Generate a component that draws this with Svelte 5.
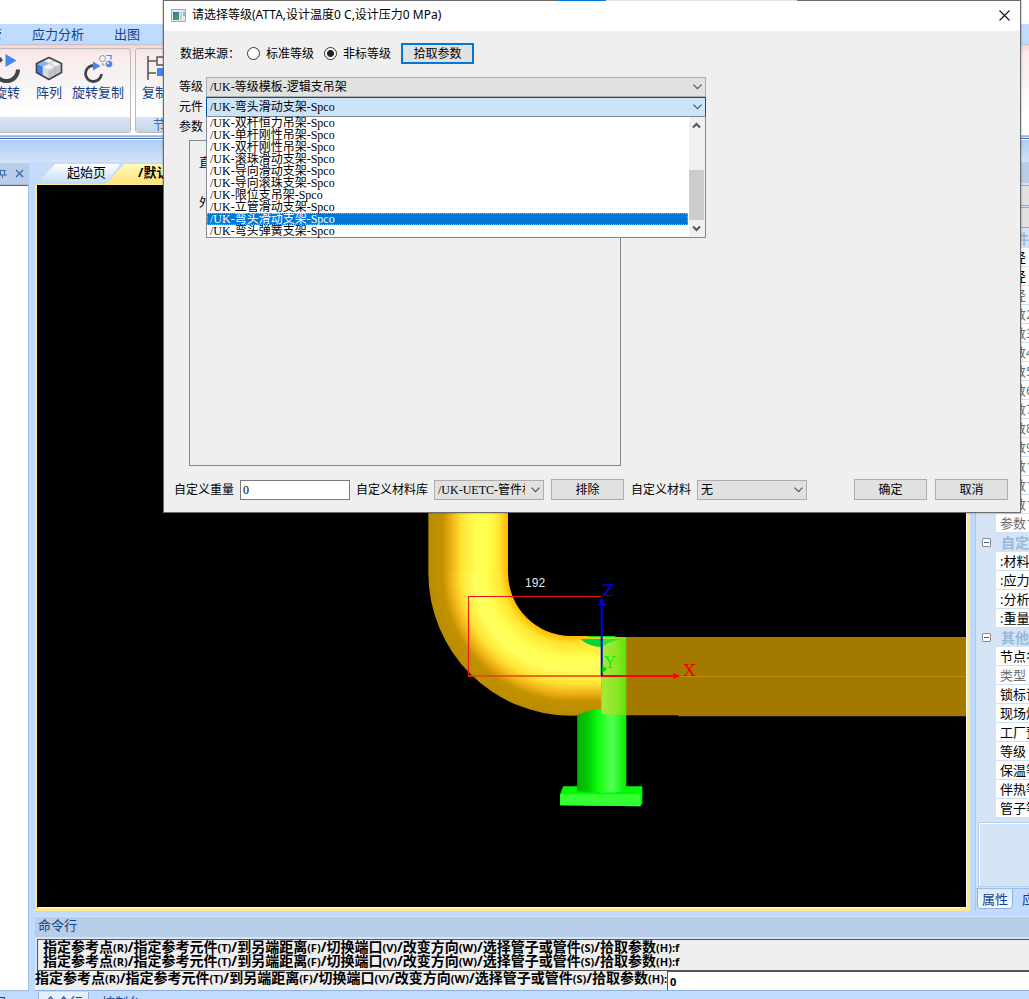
<script lang="ts">
  const menus = ['支管', '应力分析', '出图'];

  const grades = ['/UK-等级模板-逻辑支吊架'];
  const components = [
    '/UK-双杆恒力吊架-Spco',
    '/UK-单杆刚性吊架-Spco',
    '/UK-双杆刚性吊架-Spco',
    '/UK-滚珠滑动支架-Spco',
    '/UK-导向滑动支架-Spco',
    '/UK-导向滚珠支架-Spco',
    '/UK-限位支吊架-Spco',
    '/UK-立管滑动支架-Spco',
    '/UK-弯头滑动支架-Spco',
    '/UK-弯头弹簧支架-Spco'
  ];

  let source = $state('custom');
  let grade = $state(grades[0]);
  let component = $state('/UK-弯头滑动支架-Spco');
  let weight = $state('0');
  let command = $state('0');

  const prompts = [
    ['指定参考点', 'R'],
    ['指定参考元件', 'T'],
    ['到另端距离', 'F'],
    ['切换端口', 'V'],
    ['改变方向', 'W'],
    ['选择管子或管件', 'S'],
    ['拾取参数', 'H']
  ];

  // muted rows are read-only
  const sections = [
    {
      title: '管件',
      rows: [
        { name: '直径' },
        { name: '外径' },
        { name: '内径', muted: true },
        ...[2, 3, 4, 5, 6, 7, 8, 9, 10, 11, 12, 13].map((n) => ({ name: `参数${n}`, muted: true }))
      ]
    },
    {
      title: '自定义',
      rows: [{ name: ':材料' }, { name: ':应力' }, { name: ':分析' }, { name: ':重量' }]
    },
    {
      title: '其他',
      rows: [
        { name: '节点名' },
        { name: '类型', muted: true },
        { name: '锁标识' },
        { name: '现场焊' },
        { name: '工厂预制' },
        { name: '等级' },
        { name: '保温等级' },
        { name: '伴热等级' },
        { name: '管子等级' }
      ]
    }
  ];
</script>

{#snippet chevron()}
  <svg class="chevron" width="9" height="6" viewBox="0 0 9 6" aria-hidden="true">
    <path d="M0.5 0.7 L4.5 4.7 L8.5 0.7" fill="none" stroke="#555" stroke-width="1.2" />
  </svg>
{/snippet}

{#snippet promptText()}
  {#each prompts as [name, key], i}{name}<small>({key})</small>{#if i < prompts.length - 1}/{:else}<small>:</small>{/if}{/each}
{/snippet}

<div class="app">
  <div class="app-title"></div>

  <nav class="menubar">
    <div class="menu-items">
      {#each menus as menu}
        <button class="menu">{menu}</button>
      {/each}
    </div>
  </nav>

  <div class="ribbon">
    <div class="group first">
      <div class="tools">
        <button class="tool">
          <svg width="32" height="32" viewBox="0 0 32 32">
            <path d="M11 6 A11.5 11.5 0 1 0 27 16.500" fill="none" stroke="#414449" stroke-width="4" />
            <path d="M14.500 1 L25.500 7.500 L14.500 14 Z" fill="#4285f4" />
          </svg>
          旋转
        </button>
        <button class="tool">
          <svg width="32" height="32" viewBox="0 0 32 32">
            <path d="M3.500 10.500 L16 16.500 V26.500 L3.500 19.500 Z" fill="#d9dadd" />
            <path d="M28.500 10.500 L16 16.500 V26.500 L28.500 19.500 Z" fill="#c3c5c9" />
            <path d="M3.500 10.500 L16 4.500 L28.500 10.500 L16 16.500 Z" fill="#f1f2f3" />
            <path d="M3.500 10.500 L9.700 7.500 L16 10.500 L9.700 13.500 Z" fill="#8ab6f8" />
            <path d="M3.500 10.500 L9.700 13.500 V23 L3.500 19.500 Z" fill="#3f80ea" />
            <path d="M9.700 13.500 L22.300 7.500 M9.700 7.500 L22.300 13.500 V23 M16 16.500 V26 M16 21 L28 15" fill="none" stroke="#b3b6bb" stroke-width="0.800" />
            <path d="M3.500 10.500 L16 4.500 L28.500 10.500 V19.500 L16 26.500 L3.500 19.500 Z" fill="none" stroke="#414449" stroke-width="1.700" stroke-linejoin="round" />
          </svg>
          阵列
        </button>
        <button class="tool">
          <svg width="32" height="32" viewBox="0 0 32 32">
            <path d="M11 12.500 A8 8 0 1 0 19.500 21" fill="none" stroke="#414449" stroke-width="2.800" />
            <path d="M11 8.500 L18.500 13 L11 17.500 Z" fill="#4285f4" />
            <circle cx="20.500" cy="5.500" r="3" fill="#f4f4f4" stroke="#8c8f94" />
            <circle cx="27" cy="11" r="3" fill="#4285f4" stroke="#6f89b5" />
            <circle cx="26" cy="10" r="1.200" fill="#cfe0fb" />
            <path d="M24.500 2.500 H29 V6.500" fill="none" stroke="#4285f4" stroke-width="1.200" />
            <path d="M20.500 10 V12 H22.500" fill="none" stroke="#8c8f94" />
          </svg>
          旋转复制
        </button>
      </div>
      <div class="caption"></div>
    </div>
    <div class="group">
      <div class="tools">
        <button class="tool">
          <svg width="32" height="32" viewBox="0 0 32 32">
            <path d="M9 3 V27 M9 8 H17 M9 20 H17" fill="none" stroke="#55585e" stroke-width="1.600" />
            <path d="M18 4 h7 v8 h-7 z" fill="none" stroke="#55585e" stroke-width="1.600" />
            <path d="M18 15 h8 v8 h-8 z" fill="#4285f4" />
          </svg>
          复制
        </button>
      </div>
      <div class="caption">节点</div>
    </div>
  </div>

  <div class="ribbon-foot"></div>

  <div class="body">
    <aside class="left-dock">
      <header class="dock-head">
        <button class="dock-btn" aria-label="固定">
          <svg width="9" height="9" viewBox="0 0 9 9"><path d="M1 1.500 H8 M2.500 1.500 V6 M6.500 1.500 V6 M0 6 H9 M4.500 6 V9" fill="none" stroke="#3d67a5" /></svg>
        </button>
        <button class="dock-btn" aria-label="关闭">
          <svg width="9" height="9" viewBox="0 0 9 9"><path d="M1 1 L8 8 M8 1 L1 8" fill="none" stroke="#3d67a5" stroke-width="1.300" /></svg>
        </button>
      </header>
      <div class="dock-body"></div>
      <div class="foot-tabs end"><button class="foot-tab">项目</button></div>
    </aside>

    <div class="main">
      <div class="upper">
        <section class="document">
          <div class="doc-tabs">
            <button class="doc-tab">起始页</button>
            <button class="doc-tab active">/默认视图</button>
          </div>
          <div class="viewport">
            <svg viewBox="38 186 927 721" preserveAspectRatio="xMinYMin slice">
              <defs>
                <linearGradient id="pipe-v">
                  <stop offset="0" stop-color="#b98c00" />
                  <stop offset="0.18" stop-color="#c39100" />
                  <stop offset="0.3" stop-color="#f3b41a" />
                  <stop offset="0.42" stop-color="#ffe636" />
                  <stop offset="0.6" stop-color="#ffff52" />
                  <stop offset="0.75" stop-color="#ffff4c" />
                  <stop offset="0.88" stop-color="#ffe733" />
                  <stop offset="1" stop-color="#ffb800" />
                </linearGradient>
                <radialGradient id="pipe-bend" gradientUnits="userSpaceOnUse" cx="571" cy="573" r="142.500">
                  <stop offset="0.443" stop-color="#ffb800" />
                  <stop offset="0.5" stop-color="#ffe733" />
                  <stop offset="0.6" stop-color="#ffff54" />
                  <stop offset="0.68" stop-color="#ffff60" />
                  <stop offset="0.77" stop-color="#ffe636" />
                  <stop offset="0.84" stop-color="#f3b41a" />
                  <stop offset="0.9" stop-color="#c39100" />
                  <stop offset="1" stop-color="#b98c00" />
                </radialGradient>
                <linearGradient id="pipe-h" x1="0" y1="0" x2="0" y2="1">
                  <stop offset="0" stop-color="#ffb800" />
                  <stop offset="0.1" stop-color="#ffe733" />
                  <stop offset="0.28" stop-color="#ffff54" />
                  <stop offset="0.43" stop-color="#ffff60" />
                  <stop offset="0.59" stop-color="#ffe636" />
                  <stop offset="0.71" stop-color="#f3b41a" />
                  <stop offset="0.82" stop-color="#c39100" />
                  <stop offset="1" stop-color="#b98c00" />
                </linearGradient>
                <linearGradient id="post">
                  <stop offset="0" stop-color="#00b000" />
                  <stop offset="0.2" stop-color="#00c800" />
                  <stop offset="0.42" stop-color="#0cff0c" />
                  <stop offset="0.7" stop-color="#55ff55" />
                  <stop offset="1" stop-color="#00f000" />
                </linearGradient>
                <linearGradient id="post-through">
                  <stop offset="0" stop-color="#a8e83a" />
                  <stop offset="0.6" stop-color="#8ae828" />
                  <stop offset="1" stop-color="#5ee200" />
                </linearGradient>
              </defs>

              <rect x="428.500" y="500" width="79.500" height="73.500" fill="url(#pipe-v)" />
              <path d="M428.500 573 A142.500 142.500 0 0 0 571 715.500 V636 A63 63 0 0 1 508 573 Z" fill="url(#pipe-bend)" />
              <rect x="570.500" y="636" width="31" height="79.500" fill="url(#pipe-h)" />
              <path d="M601 637 H985 V716 H678 V715 H601 Z" fill="#a37900" />
              <path d="M680 676.500 H985" stroke="#bd8d00" />

              <path d="M580 639 H601 V647 Q590 647 580 639 Z" fill="#00d43a" />
              <path d="M588 636.500 H615" stroke="#00e000" />
              <rect x="601" y="637" width="25" height="79" fill="url(#post-through)" />
              <path d="M601 639 H622 Q612 640 601 647 Z" fill="#35e52c" />

              <path d="M563 786 H642 V803 L640 806 L560 805 V794 Z" fill="#00f800" />
              <path d="M560 794 H640 V806 L560 805 Z" fill="#33ff33" />
              <path d="M577 715 Q589 709 601 709 V714 L626 715 V791 Q601 794 577 791 Z" fill="url(#post)" />

              <path d="M601 596.500 H468.500 V676" fill="none" stroke="#f01010" />
              <path d="M468 676 H601" stroke="#e8420a" stroke-width="1.500" />
              <path d="M601 676 H674" stroke="#f00" stroke-width="2" />
              <path d="M673 673 L680 676 L673 679 Z" fill="#f00" />
              <path d="M601.500 676 V603" stroke="#0000e6" stroke-width="2" />
              <path d="M598 605 L601.500 597 L605 605 Z" fill="#0000f0" />
              <path d="M602 665 L607 669 L602 673 Z" fill="#00dc00" />

              <text x="525" y="587" class="dim">192</text>
              <text x="602" y="596" class="axis" fill="#0000e6">Z</text>
              <text x="604" y="668" class="axis" fill="#10f010">Y</text>
              <text x="683" y="676" class="axis" fill="#f00000">X</text>
            </svg>
          </div>
        </section>

        <aside class="props">
          <header class="props-head"></header>
          <select class="props-pick" aria-label="对象"></select>
          <select class="props-pick" aria-label="过滤"></select>
          <div class="prop-grid">
            {#each sections as section}
              <div class="prop-title">
                <button class="fold" aria-label="折叠{section.title}"></button>
                <span>{section.title}</span>
              </div>
              {#each section.rows as row}
                <div class="prop" class:muted={row.muted}>{row.name}</div>
              {/each}
            {/each}
          </div>
          <div class="prop-desc"></div>
          <div class="prop-tabs">
            <button class="prop-tab active">属性</button>
            <button class="prop-tab">应力</button>
          </div>
        </aside>
      </div>

      <section class="command">
        <header class="command-head">命令行</header>
        <div class="history">
          <p>{@render promptText()}<small>f</small></p>
          <p>{@render promptText()}<small>f</small></p>
        </div>
        <div class="prompt">
          <label for="command">{@render promptText()}</label>
          <input id="command" bind:value={command} />
        </div>
      </section>
      <div class="foot-tabs">
        <button class="foot-tab active">命令行</button>
        <button class="foot-tab">控制台</button>
      </div>
    </div>
  </div>

  <div class="dialog" role="dialog" aria-labelledby="dialog-title">
    <div class="edge"><span></span></div>
    <header class="dialog-head">
      <svg width="15" height="13" viewBox="0 0 15 13" aria-hidden="true">
        <defs>
          <linearGradient id="app-icon" x1="0" y1="0" x2="1" y2="1">
            <stop offset="0" stop-color="#3a6ea8" />
            <stop offset="1" stop-color="#46a86c" />
          </linearGradient>
        </defs>
        <rect x="0.500" y="0.500" width="14" height="12" fill="#e4e9ed" stroke="#a3abb3" />
        <rect x="2" y="3" width="6" height="8" fill="url(#app-icon)" />
        <rect x="9" y="3" width="2" height="8" fill="#c5d0d6" />
        <rect x="12" y="3" width="2" height="4" fill="#9fb8a8" />
      </svg>
      <span id="dialog-title">请选择等级(ATTA,设计温度0 C,设计压力0 MPa)</span>
      <button class="close" aria-label="关闭">
        <svg width="11" height="11" viewBox="0 0 11 11"><path d="M0.500 0.500 L10.500 10.500 M10.500 0.500 L0.500 10.500" stroke="#111" stroke-width="1.100" /></svg>
      </button>
    </header>

    <div class="source">
      <span>数据来源：</span>
      <label><input type="radio" value="standard" bind:group={source} />标准等级</label>
      <label><input type="radio" value="custom" bind:group={source} />非标等级</label>
      <button class="btn focus">拾取参数</button>
    </div>

    <div class="fields">
      <label for="grade">等级</label>
      <div class="combo">
        <select id="grade" bind:value={grade}>
          {#each grades as item}<option>{item}</option>{/each}
        </select>
        {@render chevron()}
      </div>

      <label for="component">元件</label>
      <div class="combo open">
        <select id="component" bind:value={component}>
          {#each components as item}<option>{item}</option>{/each}
        </select>
        {@render chevron()}
        <div class="dropdown">
          <ul role="listbox" aria-label="元件">
            {#each components as item}
              <li role="option" aria-selected={item === component} class:selected={item === component}>{item}</li>
            {/each}
          </ul>
          <div class="scroll">
            <svg width="9" height="7" viewBox="0 0 9 7"><path d="M1 5.500 L4.500 2 L8 5.500" fill="none" stroke="#555" stroke-width="2" /></svg>
            <span class="thumb"></span>
            <svg width="9" height="7" viewBox="0 0 9 7"><path d="M1 1.500 L4.500 5 L8 1.500" fill="none" stroke="#555" stroke-width="2" /></svg>
          </div>
        </div>
      </div>

      <span>参数</span>
    </div>

    <div class="params">
      <span>直径</span>
      <span>外径</span>
    </div>

    <footer class="dialog-foot">
      <label for="weight">自定义重量</label>
      <input id="weight" class="text" bind:value={weight} />
      <label for="library">自定义材料库</label>
      <div class="combo small">
        <select id="library"><option>/UK-UETC-管件材料库</option></select>
        {@render chevron()}
      </div>
      <button class="btn exclude">排除</button>
      <label for="material">自定义材料</label>
      <div class="combo small">
        <select id="material"><option>无</option></select>
        {@render chevron()}
      </div>
      <div class="actions">
        <button class="btn">确定</button>
        <button class="btn">取消</button>
      </div>
    </footer>
  </div>
</div>

<style>
  :global(body) {
    margin: 0;
    background: #bfdbff;
  }

  .app,
  .app * {
    box-sizing: border-box;
  }

  .app {
    position: relative;
    display: flex;
    flex-direction: column;
    height: 100vh;
    overflow: hidden;
    background: #bfdbff;
    color: #000;
    font: 13px/18px "Open Sans", "Noto Sans CJK SC", sans-serif;
    white-space: nowrap;
  }

  button {
    margin: 0;
    padding: 0;
    border: 0;
    background: none;
    color: inherit;
    font: inherit;
  }

  svg {
    display: block;
    flex: none;
  }

  .app-title {
    flex: 0 0 24px;
    background: #fff;
  }

  .menubar {
    flex: 0 0 21px;
    color: #15428b;
    border-bottom: 1px solid #bfc4cc;
  }

  .menu-items {
    display: flex;
    justify-content: flex-end;
    align-items: center;
    gap: 30px;
    width: 140px;
    height: 20px;
  }

  .ribbon {
    display: flex;
    flex: 0 0 89px;
    gap: 4px;
    padding: 3px 0 1px;
    color: #15428b;
    background: linear-gradient(#f7cfcf, #faeaea 8px, #f7f3f3 35px, #fff 65px);
  }

  .group {
    display: flex;
    flex-direction: column;
    width: 120px;
    overflow: hidden;
    border: 1px solid #bbb;
    border-radius: 3px;
  }

  .group.first {
    width: 131px;
    border-left: 0;
    border-radius: 0 3px 3px 0;
  }

  .tools {
    display: flex;
    flex: 1;
    padding: 4px 4px 0 0;
  }

  .first .tools {
    justify-content: flex-end;
  }

  .group:not(.first) .tools {
    padding-left: 3px;
  }

  .tool {
    display: flex;
    flex: none;
    flex-direction: column;
    align-items: center;
    min-width: 42px;
    height: 48px;
    padding: 0 2px;
    line-height: 15px;
  }

  .group:not(.first) .tool {
    min-width: 30px;
    padding: 0;
  }

  .caption {
    flex: 0 0 15px;
    padding-left: 17px;
    color: #3e6db0;
    line-height: 14px;
    background: linear-gradient(#dbe5f4, #c5d4ec);
  }

  .ribbon-foot {
    flex: 0 0 28px;
    background: linear-gradient(#fff 1px, #b9cff0 1px, #86a8dc 3px, #dce9fb 3px, #dce9fb 4px, #3e69b4 4px, #3e69b4 5px, #fff 5px, #fff 6px, #b0cdf5 6px, #d3e3f9);
  }

  .body {
    display: flex;
    flex: 1;
    gap: 6px;
    min-height: 0;
  }

  .left-dock {
    display: flex;
    flex: 0 0 29px;
    flex-direction: column;
    min-width: 0;
    overflow: hidden;
  }

  .dock-head {
    display: flex;
    flex: 0 0 22px;
    align-items: center;
    justify-content: flex-end;
    gap: 8px;
    padding-right: 5px;
    background: #b7cde8;
    border-top: 1px solid #d5e5f8;
  }

  .dock-body {
    flex: 1;
    background: #fff;
    border: solid #a9bdd8;
    border-width: 1px 1px 1px 0;
    box-shadow: inset 0 1px #666;
  }

  .main {
    display: flex;
    flex: 1;
    flex-direction: column;
    min-width: 0;
  }

  .upper {
    display: flex;
    flex: 1;
    gap: 5px;
    min-height: 0;
  }

  .document {
    display: flex;
    flex: 1;
    flex-direction: column;
    min-width: 0;
  }

  .doc-tabs {
    display: flex;
    flex: 0 0 22px;
    padding: 2px 0 0 2px;
    background: linear-gradient(90deg, #c6dafa, #cfe1fb);
  }

  .doc-tab {
    padding: 0 14px 4px 30px;
    line-height: 16px;
    background: linear-gradient(#fff, #bfdcf8);
    clip-path: polygon(18px 0, 100% 0, calc(100% - 14px) 100%, 0 100%);
  }

  .doc-tab.active {
    margin-left: -14px;
    padding-left: 32px;
    font-weight: 700;
    background: linear-gradient(#fff9b8, #ffe27a);
  }

  .viewport {
    flex: 1;
    min-height: 0;
    padding: 0 1px 1px 0;
    background: #fff;
    border: solid #ffe98c;
    border-width: 1px 3px 3px 2px;
    box-shadow: inset 1px 1px #777;
  }

  .viewport svg {
    width: 100%;
    height: 100%;
    background: #000;
  }

  .dim {
    fill: #e6e6e6;
    font: 12px "Liberation Sans", sans-serif;
  }

  .axis {
    font: 17px "DejaVu Serif", serif;
  }

  .props {
    display: flex;
    flex: 0 0 54px;
    flex-direction: column;
    overflow: hidden;
    background: #d5e4f4;
    border-left: 1px solid #a9c6ec;
  }

  .props-head {
    flex: 0 0 21px;
    margin-bottom: 2px;
    background: #b7cde8;
  }

  .props-pick {
    flex: 0 0 21px;
    width: 100px;
    margin: 0 0 1px 2px;
    appearance: none;
    border: 1px solid #a5a5a5;
    border-radius: 0;
    background: #e1e1e1;
  }

  .prop-grid {
    flex: none;
    font-size: 13px;
    line-height: 18px;
  }

  .prop-title {
    display: flex;
    align-items: center;
    gap: 10px;
    height: 19px;
    padding-left: 6px;
    color: #97b9dc;
    font-weight: 700;
    font-size: 14px;
  }

  .fold {
    flex: none;
    width: 9px;
    height: 9px;
    border: 1px solid #8c8c8c;
    border-radius: 1px;
    background: linear-gradient(#3c5fa8, #3c5fa8) center / 5px 1px no-repeat #fff;
  }

  .prop {
    height: 19px;
    margin-left: 20px;
    padding-left: 4px;
    background: #fff;
    border-bottom: 1px solid #cfe0f3;
  }

  .prop.muted {
    color: #6d6d6d;
  }

  .prop-desc {
    flex: 1;
    margin: 4px 0 1px 2px;
    border: solid #b3cdef;
    border-width: 1px 0 1px 1px;
    box-shadow: inset 1px 1px #fff;
  }

  .prop-tabs {
    display: flex;
    flex: 0 0 23px;
    align-items: flex-start;
    gap: 5px;
    padding-left: 1px;
    color: #15428b;
    background: #bfdbff;
    border-top: 1px solid #9dbde6;
  }

  .prop-tab {
    height: 20px;
    padding: 0 4px;
  }

  .prop-tab.active {
    border: solid #8fb2e0;
    border-width: 0 1px 1px;
    border-radius: 0 0 4px 4px;
    background: linear-gradient(#d8e9fb, #f6fbff);
  }

  .command {
    flex: none;
    margin-top: 5px;
    background: #d5e4f4;
    border-bottom: 1px solid #8fb0dc;
  }

  .command-head {
    height: 21px;
    padding: 0 3px;
    color: #15428b;
    line-height: 17px;
    background: #b7cde8;
    border-top: 1px solid #d5e5f8;
  }

  .history {
    height: 32px;
    margin: 2px 0 0 2px;
    padding: 0 5px;
    border: 1px solid #555;
    border-right: 0;
    background: #efefef;
  }

  .history p {
    margin: 0;
    font-weight: 700;
    font-size: 14px;
    line-height: 13px;
  }

  small {
    font-size: 11px;
  }

  .prompt {
    display: flex;
    height: 19px;
    background: #efefef;
    font-weight: 700;
    font-size: 14px;
    line-height: 14px;
  }

  .prompt input {
    flex: 1;
    min-width: 0;
    padding: 0 2px;
    border: solid #555;
    border-width: 1px 0 0 1px;
    outline: 0;
    background: #fff;
    font: 700 11px "Open Sans", sans-serif;
  }

  .foot-tabs {
    display: flex;
    flex: 0 0 8px;
    gap: 8px;
    padding: 1px 0 0 3px;
    overflow: hidden;
    color: #15428b;
  }

  .foot-tabs.end {
    justify-content: flex-end;
    padding-right: 22px;
  }

  .foot-tab {
    flex: none;
    height: 20px;
    padding: 0 5px;
  }

  .end .foot-tab {
    padding: 0;
  }

  .foot-tab.active {
    border: 1px solid #8fb2e0;
    border-top: 0;
    background: #e4f0fd;
  }

  .dialog {
    position: absolute;
    top: 0;
    left: 163px;
    right: 8px;
    border: solid #6b6b6b;
    border-width: 0 1px 1px;
    background: #efefef;
    box-shadow: 0 0 2px rgba(0, 0, 0, 0.4);
    font: 12px/20px "Liberation Serif", "Noto Sans CJK SC", sans-serif;
  }

  .edge {
    display: flex;
    height: 1px;
    background: #6b6b6b;
  }

  .edge span {
    width: 28%;
    margin-left: 46%;
    background: linear-gradient(90deg, #0078d7 20%, #e5e5e5 20%);
  }

  .dialog-head {
    display: flex;
    align-items: center;
    gap: 6px;
    height: 30px;
    padding: 0 10px 2px 7px;
    background: #fff;
    font-family: "Noto Sans", "Noto Sans CJK SC", sans-serif;
  }

  .close {
    margin-left: auto;
  }

  .source {
    display: flex;
    align-items: center;
    gap: 10px;
    height: 21px;
    margin: 12px 16px 0;
  }

  .source > span {
    width: 57px;
  }

  .source label {
    display: flex;
    align-items: center;
    gap: 6px;
  }

  .source input {
    appearance: none;
    width: 13px;
    height: 13px;
    margin: 0;
    border: 1px solid #333;
    border-radius: 50%;
    background: #fff;
  }

  .source input:checked {
    background: radial-gradient(circle, #222 3px, #fff 4px);
  }

  .btn {
    width: 73px;
    height: 21px;
    padding-top: 1px;
    line-height: 18px;
    border: 1px solid #adadad;
    background: #e1e1e1;
  }

  .btn.focus {
    line-height: 16px;
    border: 2px solid #0078d7;
  }

  .fields {
    display: grid;
    grid-template-columns: 24px minmax(0, 500px);
    column-gap: 3px;
    margin: 13px 15px 0;
  }

  .combo {
    position: relative;
    display: grid;
    align-items: center;
    height: 20px;
  }

  .combo select {
    grid-area: 1 / 1;
    appearance: none;
    width: 100%;
    height: 20px;
    margin: 0;
    padding: 0 18px 0 3px;
    border: 1px solid #adadad;
    border-radius: 0;
    outline: 0;
    background: #e1e1e1;
    color: #000;
    font: inherit;
    line-height: 18px;
  }

  .combo.open select {
    border-color: #005499;
    background: #cce4f7;
  }

  .combo.small {
    width: 110px;
  }

  .chevron {
    grid-area: 1 / 1;
    justify-self: end;
    margin-right: 4px;
    pointer-events: none;
  }

  .dropdown {
    position: absolute;
    top: 19px;
    left: 0;
    right: 0;
    z-index: 1;
    display: flex;
    border: 1px solid #828790;
    background: #fff;
  }

  .dropdown ul {
    flex: 1;
    margin: 0;
    padding: 0 1px 0 0;
    list-style: none;
  }

  .dropdown li {
    height: 12px;
    padding-left: 3px;
    line-height: 12px;
  }

  .dropdown li.selected {
    color: #fff;
    background: #0078d7;
    outline: 1px dotted #ff9a3c;
    outline-offset: -1px;
  }

  .scroll {
    display: flex;
    flex: 0 0 16px;
    flex-direction: column;
    align-items: center;
    justify-content: space-between;
    padding: 5px 1px 5px 0;
    background: #f0f0f0;
  }

  .thumb {
    align-self: stretch;
    height: 50px;
    margin-top: auto;
    margin-bottom: 5px;
    background: #cdcdcd;
  }

  .params {
    display: flex;
    flex-direction: column;
    gap: 20px;
    width: 432px;
    height: 326px;
    margin: 3px 0 0 25px;
    padding: 12px 9px;
    border: 1px solid #828790;
  }

  .dialog-foot {
    display: flex;
    align-items: center;
    gap: 6px;
    height: 21px;
    margin: 13px 12px 12px 10px;
  }

  .text {
    width: 110px;
    height: 20px;
    padding: 0 2px;
    border: 1px solid #7a7a7a;
    background: #fff;
    font: inherit;
  }

  .exclude {
    margin: 0 1px;
  }

  .actions {
    display: flex;
    gap: 8px;
    margin-left: auto;
  }
</style>
